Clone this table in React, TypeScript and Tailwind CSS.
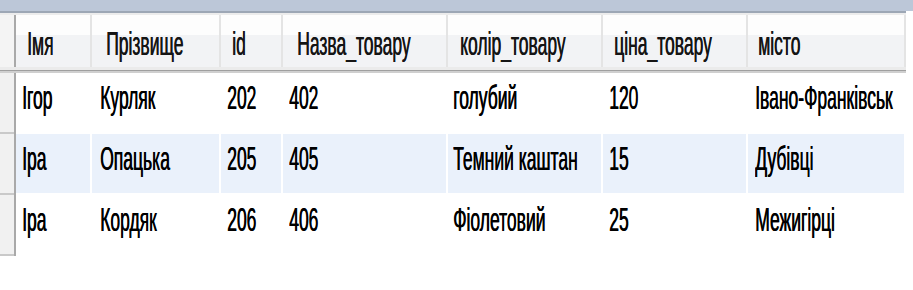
import React from 'react'

const columns = [
  { title: 'Імя', w: 'w-[76px]', hp: 'pl-[11px]', dp: 'pl-[6px]' },
  { title: 'Прізвище', w: 'w-[129px]', hp: 'pl-[14px]', dp: 'pl-[8px]' },
  { title: 'id', w: 'w-[62px]', hp: 'pl-[11px]', dp: 'pl-[6px]' },
  { title: 'Назва_товару', w: 'w-[165px]', hp: 'pl-[14px]', dp: 'pl-[6px]' },
  { title: 'колір_товару', w: 'w-[155px]', hp: 'pl-[12px]', dp: 'pl-[5px]' },
  { title: 'ціна_товару', w: 'w-[145px]', hp: 'pl-[11px]', dp: 'pl-[6px]' },
  { title: 'місто', w: 'w-[158px]', hp: 'pl-[10px]', dp: 'pl-[7px]' },
]

const rows = [
  ['Ігор', 'Курляк', '202', '402', 'голубий', '120', 'Івано-Франківськ'],
  ['Іра', 'Опацька', '205', '405', 'Темний каштан', '15', 'Дубівці'],
  ['Іра', 'Кордяк', '206', '406', 'Фіолетовий', '25', 'Межигірці'],
]

// text in the grid is drawn squashed: normal width, double height
function Stretched({ children }: { children: React.ReactNode }) {
  return (
    <span className="inline-block origin-top scale-y-195 whitespace-nowrap text-[17.5px] leading-none [text-shadow:0.4px_0_0_currentColor]">
      {children}
    </span>
  )
}

export default function App() {
  return (
    <div className="h-[290px] w-[913px] overflow-hidden bg-white font-['Liberation_Sans',Arial,sans-serif] text-black">
      {/* title strip */}
      <div className="h-[11px] bg-[#bcc7d8]" />
      <div className="h-[2px] w-[906px] bg-[#9da7b5]" />
      <div className="h-[2px] w-[906px] bg-[#ececec]" />

      {/* header */}
      <div className="flex h-[52px] w-[906px]">
        <div className="w-[14px] bg-[#f4f4f4]" />
        <div className="w-[2px] bg-[#a9a9a9]" />
        {columns.map((c) => (
          <div
            key={c.title}
            className={`${c.w} ${c.hp} flex items-start border-r-2 border-[#e4e4e4] bg-[linear-gradient(to_bottom,#fdfdfd_0%,#fdfdfd_38%,#f2f3f5_38%,#f2f3f5_100%)] pt-[13px] text-[#151515]`}
          >
            <Stretched>{c.title}</Stretched>
          </div>
        ))}
      </div>
      <div className="h-[3px] w-[906px] bg-[#ebebeb]" />
      <div className="h-[1px] w-[906px] bg-[#9f9f9f]" />
      <div className="h-[2px] w-[906px] bg-[#cfcfcf]" />

      {/* data rows */}
      {rows.map((r, i) => (
        <div key={i} className="flex h-[61px] w-[906px]">
          <div className="flex w-[14px] flex-col bg-[#f1f1f1]">
            <div className="flex-1" />
            <div className="h-[2px] bg-[#c9c9c9]" />
          </div>
          <div className="w-[2px] bg-[#a9a9a9]" />
          {r.map((v, j) => (
            <div key={j} className={`${columns[j].w} border-r-2 border-b-2 border-white`}>
              <div className={`${columns[j].dp} flex h-full items-start pt-[9px] ${i === 1 ? 'bg-[#eaf1fb]' : 'bg-white'}`}>
                <Stretched>{v}</Stretched>
              </div>
            </div>
          ))}
        </div>
      ))}
    </div>
  )
}
